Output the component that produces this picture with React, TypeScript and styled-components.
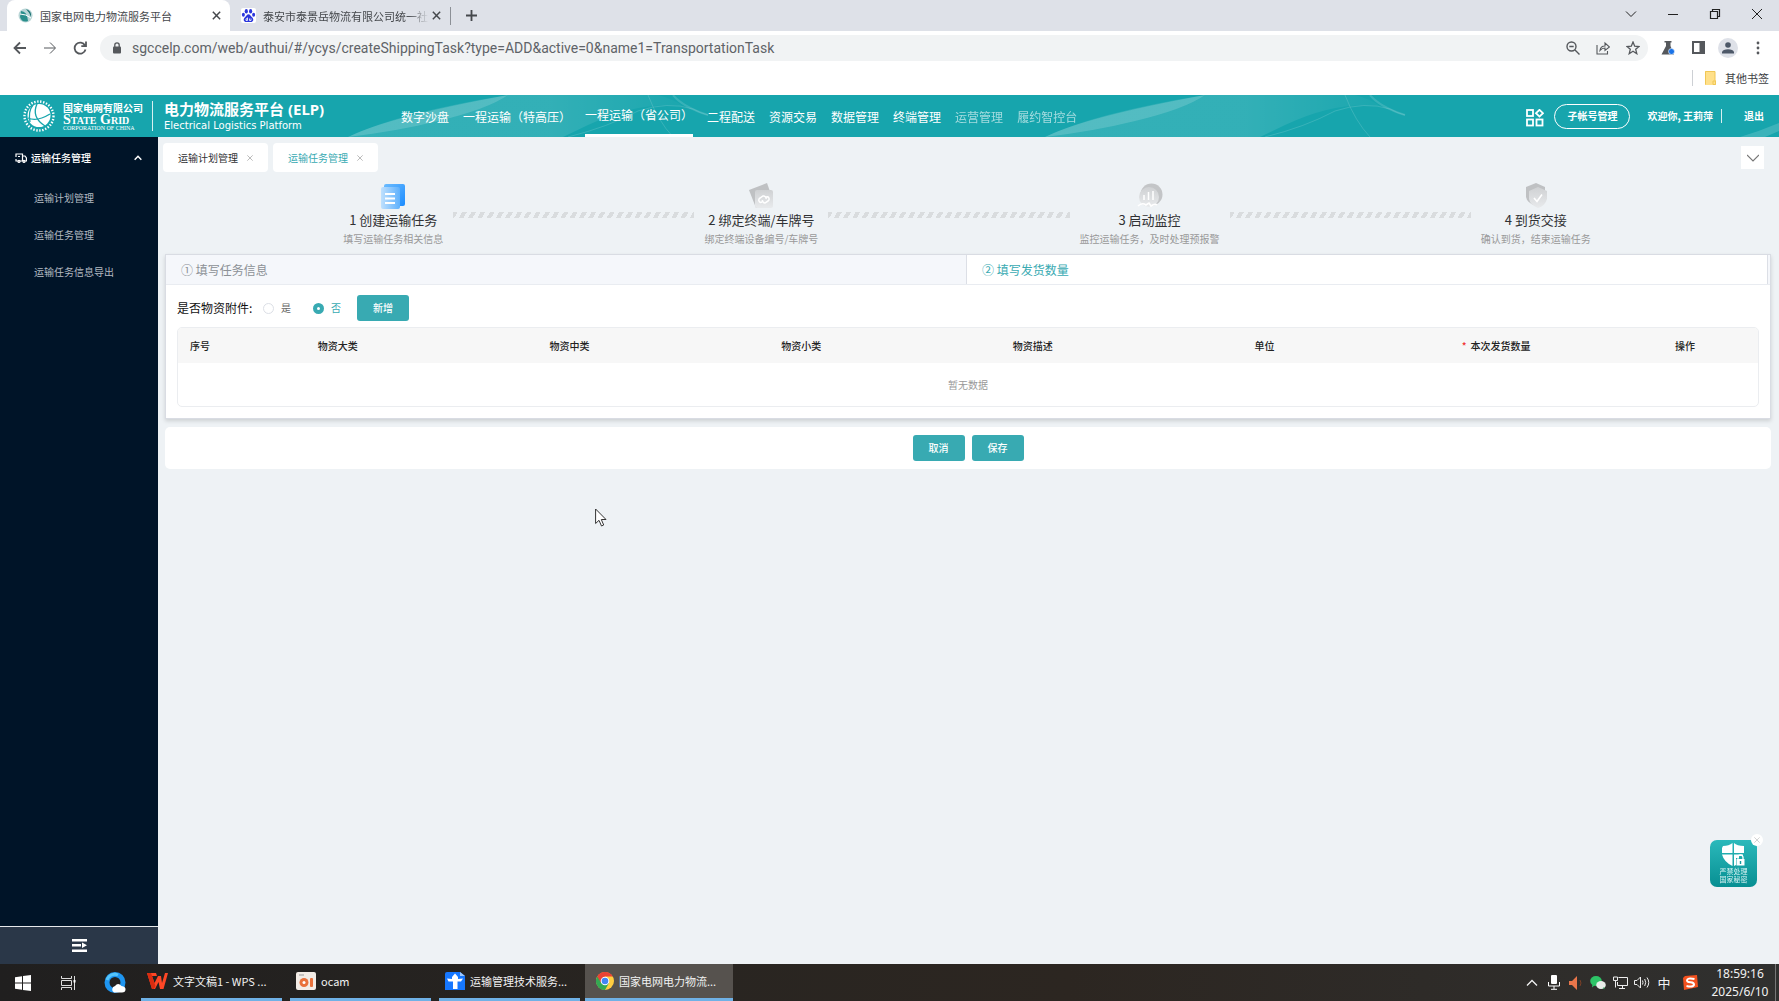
import React from "react";
import styled, { createGlobalStyle, css } from "styled-components";

const cjk = `"Noto Sans CJK SC", sans-serif`;
const teal = "#38aab2";

const GlobalStyle = createGlobalStyle`
  * { box-sizing: border-box; }
  html, body { margin: 0; }
  body { font-family: ${cjk}; font-size: 10px; line-height: 16px; color: #303133; background: #eef2f5; }
  button { font: inherit; color: inherit; background: none; border: 0; padding: 0; }
  a { color: inherit; text-decoration: none; }
  svg { display: block; flex: none; }
`;

const Screen = styled.div`
  display: flex;
  flex-direction: column;
  height: 100vh;
  overflow: hidden;
`;

/* ---------- browser ---------- */
const TabStrip = styled.div`
  display: flex;
  align-items: stretch;
  height: 31px;
  padding-left: 7px;
  background: #dee1e8;
  color: #45484c;
  font-size: 11px;
`;
const BrowserTab = styled.div<{ $active?: boolean }>`
  display: flex;
  align-items: center;
  gap: 7px;
  width: ${(p) => (p.$active ? 223 : 220)}px;
  padding: 0 8px 0 11px;
  border-radius: 8px 8px 0 0;
  background: ${(p) => (p.$active ? "#fff" : "none")};
  button { margin-left: -6px; }
`;
const TabTitle = styled.span<{ $fade?: boolean }>`
  flex: 1;
  white-space: nowrap;
  ${(p) => p.$fade && css`mask-image: linear-gradient(90deg, #000 88%, transparent);`}
`;
const IconButton = styled.button`
  display: flex;
  align-items: center;
  justify-content: center;
  width: 12px;
  height: 16px;
`;
const NewTab = styled(IconButton)`
  align-self: center;
  width: 42px;
  height: 18px;
  border-left: 1px solid #8c9096;
`;
const WindowControls = styled.div`
  display: flex;
  align-items: center;
  margin-left: auto;
  padding: 0 1px 4px 0;
  color: #222;
  button { width: 42px; }
`;
const Toolbar = styled.div`
  display: flex;
  align-items: center;
  height: 33px;
  padding: 0 6px 0 5px;
  background: #fff;
  color: #55585c;
`;
const ToolButton = styled(IconButton)`
  width: 30px;
  height: 26px;
`;
const AddressBar = styled.div`
  flex: 1;
  display: flex;
  align-items: center;
  height: 26px;
  margin: 0 5px;
  padding-left: 13px;
  border-radius: 13px;
  background: #f1f3f4;
`;
const Url = styled.input`
  flex: 1;
  margin-left: 11px;
  padding: 0;
  border: 0;
  outline: 0;
  background: none;
  color: #5f6368;
  font: 14px/20px Roboto, sans-serif;
`;
const Avatar = styled.span`
  display: flex;
  align-items: center;
  justify-content: center;
  width: 20px;
  height: 20px;
  border-radius: 50%;
  background: #dee1e8;
`;
const Bookmarks = styled.div`
  display: flex;
  align-items: center;
  justify-content: flex-end;
  height: 31px;
  padding: 0 10px 4px 0;
  background: #fff;
  color: #3c4043;
  font-size: 11px;
`;
const Bookmark = styled.button`
  display: flex;
  align-items: center;
  gap: 9px;
  padding-left: 12px;
  border-left: 1px solid #cdd0d4;
`;

/* ---------- site header ---------- */
const Header = styled.header`
  position: relative;
  display: flex;
  align-items: center;
  height: 42px;
  padding: 0 15px 0 23px;
  background: #17a5ad;
  color: #fff;
`;
const Swoosh = styled.svg`
  position: absolute;
  inset: 0;
  width: 100%;
  height: 100%;
`;
const Brand = styled.div`
  position: relative;
  display: flex;
  align-items: center;
  width: 378px;
`;
const Company = styled.div`
  margin-left: 8px;
  padding-right: 9px;
  border-right: 1px solid #d8f0f1;
  height: 30px;
  font-weight: 700;
  line-height: 14px;
  white-space: nowrap;
`;
const CompanyEn = styled.div`
  font: 700 14px/10px "Liberation Serif", serif;
  font-variant: small-caps;
`;
const CompanySub = styled.div`
  font: 6px/6px "Liberation Serif", serif;
`;
const Product = styled.div`
  margin-left: 11px;
  font: 700 15px/20px "Noto Sans", ${cjk};
  white-space: nowrap;
`;
const ProductEn = styled.div`
  font: 10px/14px "DejaVu Sans", sans-serif;
`;
const Nav = styled.nav`
  position: relative;
  display: flex;
  gap: 14px;
  height: 100%;
  font-size: 12px;
  line-height: 44px;
  white-space: nowrap;
`;
const NavLink = styled.a<{ $active?: boolean; $dim?: boolean }>`
  opacity: ${(p) => (p.$dim ? 0.6 : 1)};
  ${(p) => p.$active && css`line-height: 40px; border-bottom: 3px solid #fff;`}
`;
const UserArea = styled.div`
  position: relative;
  display: flex;
  align-items: center;
  margin-left: auto;
  font-weight: 700;
  white-space: nowrap;
  svg { margin-top: 4px; }
`;
const AccountButton = styled.button`
  width: 76px;
  height: 25px;
  margin: 0 17px 0 10px;
  border: 1px solid #fff;
  border-radius: 13px;
  font-weight: 700;
`;
const Welcome = styled.span`
  padding-right: 8px;
  margin-right: 22px;
  border-right: 1px solid #d8f0f1;
  line-height: 14px;
`;

/* ---------- layout ---------- */
const Body = styled.div`
  flex: 1;
  display: flex;
  min-height: 0;
`;
const Sidebar = styled.aside`
  display: flex;
  flex-direction: column;
  width: 158px;
  background: #001428;
  color: #b3bac2;
`;
const MenuGroup = styled.button`
  display: flex;
  align-items: center;
  gap: 4px;
  height: 42px;
  padding: 0 15px;
  color: #fff;
  font-weight: 500;
  svg:last-child { margin-left: auto; }
`;
const MenuItem = styled.a`
  padding-left: 34px;
  line-height: 37px;
`;
const Collapse = styled.button`
  display: flex;
  align-items: center;
  justify-content: center;
  height: 38px;
  margin-top: auto;
  border-top: 1px solid #e6e9ec;
  background: #2a3748;
  color: #fff;
`;
const Main = styled.main`
  flex: 1;
  min-width: 0;
  padding: 6px 8px 0 5px;
`;
const PageTabs = styled.div`
  display: flex;
  align-items: center;
  gap: 5px;
  height: 29px;
`;
const PageTab = styled.div<{ $active?: boolean }>`
  display: flex;
  align-items: center;
  gap: 8px;
  height: 29px;
  padding: 0 15px;
  border-radius: 4px;
  background: #fff;
  color: ${(p) => (p.$active ? teal : "#303133")};
  button { color: #999; width: 7px; }
`;
const More = styled.button`
  display: flex;
  align-items: center;
  justify-content: center;
  width: 23px;
  height: 23px;
  margin: 0 7px 0 auto;
  background: #fff;
  color: #777;
`;
const Steps = styled.div`
  display: flex;
  justify-content: center;
  gap: 8px;
  height: 82px;
  padding-top: 11px;
`;
const Step = styled.div`
  display: flex;
  flex-direction: column;
  align-items: center;
  padding: 0 2px;
  white-space: nowrap;
`;
const StepTitle = styled.div`
  font-size: 13px;
  line-height: 22px;
`;
const StepNote = styled.div`
  color: #999;
`;
const Dashes = styled.div`
  width: 15%;
  height: 6px;
  margin-top: 29px;
  background: repeating-linear-gradient(120deg, #d9dcde 0 4px, transparent 4px 8px);
`;
const Card = styled.section`
  margin-left: 2px;
  border: 1px solid #d9dce3;
  background: #fff;
  box-shadow: 0 2px 4px rgba(0, 0, 0, 0.14);
`;
const CardTabs = styled.div`
  display: flex;
  height: 30px;
  padding-right: 2px;
  border-bottom: 1px solid #e9ecf1;
  background: #f5f7fb;
`;
const CardTab = styled.button<{ $active?: boolean }>`
  flex: 1;
  padding-left: 15px;
  text-align: left;
  font-size: 12px;
  color: #8c9196;
  ${(p) => p.$active && css`background: #fff; color: ${teal}; border: solid #dcdfe6; border-width: 0 1px;`}
`;
const CardBody = styled.div`
  padding: 10px 11px 11px;
`;
const FormRow = styled.div`
  display: flex;
  align-items: center;
  height: 26px;
  margin-bottom: 6px;
`;
const Legend = styled.span`
  width: 86px;
  font-size: 12px;
  color: #111;
`;
const RadioLabel = styled.label`
  display: flex;
  align-items: center;
  gap: 7px;
  width: 50px;
  color: #666;
  &:has(input:checked) { color: ${teal}; width: 44px; }
`;
const Radio = styled.input`
  appearance: none;
  width: 11px;
  height: 11px;
  margin: 0;
  border: 1px solid #dcdfe6;
  border-radius: 50%;
  &:checked { border: 4px solid ${teal}; }
`;
const Button = styled.button`
  width: 52px;
  height: 26px;
  border-radius: 3px;
  background: ${teal};
  color: #fff;
  font-weight: 500;
`;
const TableFrame = styled.div`
  border: 1px solid #ebedf0;
  border-radius: 5px;
  overflow: hidden;
`;
const Table = styled.table`
  width: 100%;
  table-layout: fixed;
  border-collapse: collapse;
  text-align: center;
  th { height: 35px; padding: 0; background: #f7f7f7; font-weight: 500; color: #222; }
  td { height: 43px; padding: 0; color: #999; }
`;
const Required = styled.span`
  margin-right: 4px;
  color: #f03030;
`;
const Actions = styled.div`
  display: flex;
  align-items: center;
  justify-content: center;
  gap: 7px;
  height: 42px;
  margin: 8px 0 0 2px;
  border-radius: 5px;
  background: #fff;
`;

/* ---------- overlays ---------- */
const Secret = styled.aside`
  position: fixed;
  right: 22px;
  bottom: 114px;
  display: flex;
  flex-direction: column;
  align-items: center;
  width: 47px;
  height: 47px;
  padding-top: 3px;
  border-radius: 7px;
  background: linear-gradient(#2bb9bb, #078f92);
  color: #d9f3f3;
  font-size: 7px;
  line-height: 8px;
  text-align: center;
`;
const SecretClose = styled.button`
  position: absolute;
  top: -6px;
  right: -6px;
  display: flex;
  align-items: center;
  justify-content: center;
  width: 12px;
  height: 12px;
  border-radius: 50%;
  background: #fff;
  color: #bbb;
`;
const Pointer = styled.svg`
  position: fixed;
  left: 595px;
  top: 508px;
`;

/* ---------- taskbar ---------- */
const Taskbar = styled.footer`
  display: flex;
  align-items: center;
  height: 37px;
  background: linear-gradient(90deg, #201f1f, #292521 40%, #2c2621 60%, #30302f);
  color: #f2f2f2;
  font-size: 11px;
`;
const SystemButton = styled(IconButton)`
  width: 46px;
  height: 37px;
`;
const Launchers = styled.div`
  display: flex;
  width: 141px;
`;
const Task = styled.button<{ $active?: boolean }>`
  display: flex;
  align-items: center;
  gap: 5px;
  width: ${(p) => (p.$active ? 148 : 141)}px;
  height: 37px;
  margin-right: ${(p) => (p.$active ? 0 : 8)}px;
  padding: 0 0 0 6px;
  ${(p) => p.$active && css`background: #56524e; margin-left: -3px; padding-left: 11px;`}
  border-bottom: 3px solid #6fb1e6;
  white-space: nowrap;
`;
const Tray = styled.div`
  display: flex;
  align-items: center;
  margin-left: auto;
`;
const TrayButton = styled(IconButton)<{ $wide?: boolean }>`
  width: ${(p) => (p.$wide ? 30 : 22)}px;
  height: 37px;
  font-size: 13px;
`;
const Clock = styled.div`
  width: 70px;
  font: 12px/18px "Noto Sans", sans-serif;
  text-align: center;
`;
const ShowDesktop = styled.button`
  width: 4px;
  height: 37px;
  border-left: 1px solid #777;
`;

type StrokeProps = { d: string; size?: number; w?: number; box?: number };
const Stroke = ({ d, size = 12, w = 1, box = 12 }: StrokeProps) => (
  <svg width={size} height={size} viewBox={`0 0 ${box} ${box}`} fill="none" stroke="currentColor" strokeWidth={w}>
    <path d={d} />
  </svg>
);
const cross = "M2 2 10 10M10 2 2 10";

const GlobeFavicon = () => (
  <svg width="15" height="15" viewBox="0 0 15 15">
    <circle cx="7.5" cy="7.5" r="7" fill="#b9d5d6" />
    <path d="M3 3Q9 3 10 13Q4 15 2 9Z" fill="#2a8f8c" />
    <path d="M8 1Q14 3 13 9Q12 5 8 1Z" fill="#16706f" />
    <path d="M2 6Q8 6 13 10" stroke="#fff" fill="none" />
  </svg>
);
const PawFavicon = () => (
  <svg width="15" height="15" viewBox="0 0 15 15">
    <rect width="15" height="15" rx="2" fill="#fff" />
    <g fill="#2b36dc">
      <ellipse cx="5.3" cy="3.2" rx="1.6" ry="2.2" />
      <ellipse cx="9.6" cy="3.2" rx="1.6" ry="2.2" />
      <ellipse cx="2.4" cy="6.8" rx="1.5" ry="2" />
      <ellipse cx="12.6" cy="6.8" rx="1.5" ry="2" />
      <path d="M7.5 6.3C9 6.3 9.6 8 11 9.2C13.5 11.5 12 14.3 9.6 14H5.4C3 14.3 1.5 11.5 4 9.2C5.4 8 6 6.3 7.5 6.3Z" />
    </g>
    <path d="M6.5 9.5V12.5H5V10.8H6.5M8.5 10.5V12.5H10V10.5" stroke="#fff" strokeWidth=".8" fill="none" />
  </svg>
);
const GridLogo = () => (
  <svg width="32" height="34" viewBox="0 0 32 34" fill="none" stroke="#fff">
    <circle cx="16" cy="17" r="14.5" strokeWidth="2.4" strokeDasharray="1.4 1.6" />
    <circle cx="16" cy="16.5" r="11.5" fill="#fff" stroke="none" />
    <path d="M14 5Q8 18 22 27M5 19Q14 23 27 15M10 6Q5 12 7 23" stroke="#17a5ad" strokeWidth="1.3" />
  </svg>
);
const AppsIcon = () => (
  <svg width="18" height="18" viewBox="0 0 18 18" fill="none" stroke="#fff" strokeWidth="1.8">
    <rect x="1" y="1" width="6" height="6" />
    <rect x="1" y="10.5" width="6" height="6" />
    <rect x="10.5" y="10.5" width="6" height="6" />
    <path d="M13.5 .8 17 4.2 13.5 7.6 10 4.2Z" />
  </svg>
);

const TaskIcon = () => (
  <svg width="26" height="26" viewBox="0 0 26 26">
    <defs>
      <linearGradient id="taskBack" x1="0" y1="0" x2="1" y2="1">
        <stop stopColor="#6cbcff" />
        <stop offset="1" stopColor="#1b8cff" />
      </linearGradient>
      <linearGradient id="taskFront" x1="0" y1="0" x2="1" y2="0">
        <stop stopColor="#bfe0fd" />
        <stop offset="1" stopColor="#5fb1fd" />
      </linearGradient>
    </defs>
    <rect x="4" y="1" width="21" height="22" rx="2" fill="url(#taskBack)" />
    <rect x="1" y="4" width="19" height="22" rx="2" fill="url(#taskFront)" />
    <path d="M5 11H15M5 15.500H15M5 20H15" stroke="#fff" strokeWidth="1.8" />
  </svg>
);
const GreyDefs = () => (
  <defs>
    <linearGradient id="greyFront" x1="0" y1="0" x2="0" y2="1">
      <stop stopColor="#cfd1d3" />
      <stop offset="1" stopColor="#e8eaec" />
    </linearGradient>
  </defs>
);
const BindIcon = () => (
  <svg width="26" height="26" viewBox="0 0 26 26">
    <GreyDefs />
    <path d="M1 7 19 0 25 17 8 25Z" fill="#bfc1c3" />
    <rect x="7" y="7" width="18" height="18" rx="2" fill="url(#greyFront)" />
    <path d="M14 19 12.500 19.500A2.500 2.500 0 0 1 12 15L15 13A2.500 2.500 0 0 1 18 16M18 14 20 13.800A2.500 2.500 0 0 1 20 18L17 20A2.500 2.500 0 0 1 14.500 17" fill="none" stroke="#fff" strokeWidth="1.5" />
  </svg>
);
const WatchIcon = () => (
  <svg width="26" height="26" viewBox="0 0 26 26">
    <circle cx="14.500" cy="11.500" r="11" fill="#c3c5c7" />
    <circle cx="12" cy="14" r="10" fill="url(#greyFront)" />
    <path d="M7 12V17M11.500 9V17M16 8V17" stroke="#fff" strokeWidth="1.5" />
    <path d="M1 23Q5 19 9 22L12 20 14 23Q18 20 20 22" stroke="#fff" strokeWidth="1.6" fill="none" />
  </svg>
);
const ShieldIcon = () => (
  <svg width="26" height="26" viewBox="0 0 26 26">
    <path d="M3 4 13 0 22 4V14Q21 20 13 23Q4 20 3 14Z" fill="#bfc1c3" />
    <path d="M6 8 15 4 24 8V16Q22 23 15 25Q7 22 6 16Z" fill="url(#greyFront)" />
    <path d="M11 15 14 18.500 19 11.500" stroke="#fff" strokeWidth="1.6" fill="none" />
  </svg>
);

const navItems = [
  { label: "数字沙盘" },
  { label: "一程运输（特高压）" },
  { label: "一程运输（省公司）", active: true },
  { label: "二程配送" },
  { label: "资源交易" },
  { label: "数据管理" },
  { label: "终端管理" },
  { label: "运营管理", dim: true },
  { label: "履约智控台", dim: true },
];
const steps = [
  { icon: <TaskIcon />, title: "1 创建运输任务", note: "填写运输任务相关信息" },
  { icon: <BindIcon />, title: "2 绑定终端/车牌号", note: "绑定终端设备编号/车牌号" },
  { icon: <WatchIcon />, title: "3 启动监控", note: "监控运输任务，及时处理预报警" },
  { icon: <ShieldIcon />, title: "4 到货交接", note: "确认到货，结束运输任务" },
];

const Browser = () => (
  <>
    <TabStrip>
      <BrowserTab $active>
        <GlobeFavicon />
        <TabTitle>国家电网电力物流服务平台</TabTitle>
        <IconButton aria-label="关闭标签页"><Stroke d={cross} w={1.6} size={11} /></IconButton>
      </BrowserTab>
      <BrowserTab>
        <PawFavicon />
        <TabTitle $fade>泰安市泰景岳物流有限公司统一社</TabTitle>
        <IconButton aria-label="关闭标签页"><Stroke d={cross} w={1.6} size={11} /></IconButton>
      </BrowserTab>
      <NewTab aria-label="新标签页"><Stroke d="M6 0V12M0 6H12" w={2} size={11} /></NewTab>
      <WindowControls>
        <IconButton aria-label="搜索标签页"><Stroke d="M1 3.500 6 8.500 11 3.500" /></IconButton>
        <IconButton aria-label="最小化"><Stroke d="M1 6.500H11" /></IconButton>
        <IconButton aria-label="还原"><Stroke d="M1.500 3.500H8.500V10.500H1.500ZM3.500 3.500V1.500H10.500V8.500H8.500" w={1.2} /></IconButton>
        <IconButton aria-label="关闭"><Stroke d="M1 1 11 11M11 1 1 11" /></IconButton>
      </WindowControls>
    </TabStrip>
    <Toolbar>
      <ToolButton aria-label="后退"><Stroke d="M13 7H2M7 1.500 1.500 7 7 12.500" box={14} size={14} w={1.8} /></ToolButton>
      <ToolButton aria-label="前进"><Stroke d="M1 7H12M7 1.500 12.500 7 7 12.500" box={14} size={14} w={1} /></ToolButton>
      <ToolButton aria-label="重新加载"><Stroke d="M12 4.500A5.500 5.500 0 1 0 12.500 8.500M13 .5V5.200H8.300" box={14} size={14} w={1.8} /></ToolButton>
      <AddressBar>
        <svg width="8" height="12" viewBox="0 0 8 12">
          <rect y="4.500" width="8" height="7" rx="1" fill="#55585c" />
          <path d="M1.800 5V3A2.200 2.200 0 0 1 6.200 3V5" fill="none" stroke="#55585c" strokeWidth="1.300" />
        </svg>
        <Url aria-label="地址" defaultValue="sgccelp.com/web/authui/#/ycys/createShippingTask?type=ADD&active=0&name1=TransportationTask" />
        <ToolButton aria-label="缩放"><Stroke d="M5.500 1A4.500 4.500 0 1 1 5.500 10A4.500 4.500 0 1 1 5.500 1M9 9 13.500 13.500M3.300 5.500H7.700" box={14} size={14} w={1.4} /></ToolButton>
        <ToolButton aria-label="分享"><Stroke d="M1 4V13H11.500V10M4 9.500Q4.500 5 9 5V2L13.500 6 9 9.500V7Q6 7 4 9.500Z" box={14} size={14} w={1.1} /></ToolButton>
        <ToolButton aria-label="收藏"><Stroke d="M7 1 8.700 5.200 13 5.500 9.700 8.300 10.800 12.700 7 10.300 3.200 12.700 4.300 8.300 1 5.500 5.300 5.200Z" box={14} size={14} w={1.3} /></ToolButton>
      </AddressBar>
      <ToolButton aria-label="实验">
        <svg width="14" height="14" viewBox="0 0 14 14">
          <path d="M3.500 0H10.500V1.500H9.500V5L13 13.500H.5L5 5V1.500H3.500Z" fill="#55585c" />
          <circle cx="10.500" cy="10.500" r="3" fill="#1a73e8" stroke="#fff" strokeWidth=".6" />
        </svg>
      </ToolButton>
      <ToolButton aria-label="侧边栏">
        <svg width="13" height="13" viewBox="0 0 13 13">
          <rect x="1" y="1" width="11" height="11" fill="none" stroke="#55585c" strokeWidth="2" />
          <rect x="7.500" y="1" width="5" height="11" fill="#55585c" />
        </svg>
      </ToolButton>
      <ToolButton aria-label="用户">
        <Avatar>
          <svg width="12" height="12" viewBox="0 0 12 12" fill="#4d5868">
            <circle cx="6" cy="3" r="2.800" />
            <path d="M0 11.500V10Q1 7.200 6 7.200T12 10V11.500Z" />
          </svg>
        </Avatar>
      </ToolButton>
      <ToolButton aria-label="菜单">
        <svg width="4" height="14" viewBox="0 0 4 14" fill="#55585c">
          <circle cx="2" cy="2" r="1.400" /><circle cx="2" cy="7" r="1.400" /><circle cx="2" cy="12" r="1.400" />
        </svg>
      </ToolButton>
    </Toolbar>
    <Bookmarks>
      <Bookmark>
        <svg width="11" height="14" viewBox="0 0 11 14">
          <path d="M0 0H10V9H11V14H0Z" fill="#ffe08a" />
          <path d="M.5 13.500V.5H10V9.500M8 13.500V10H10.500V13.500Z" stroke="#f0c755" fill="none" />
        </svg>
        其他书签
      </Bookmark>
    </Bookmarks>
  </>
);

const Wave = ({ x }: { x: number }) => (
  <g transform={`translate(${x})`}>
    <path d="M0 42Q50 18 160 0H310Q325 4 335 11Q290 6 240 30L215 42Z" fill="url(#waveFill)" />
    <path d="M0 42Q40 22 160 0Q140 14 90 26Q50 36 0 42Z" fill="#fff" opacity=".16" />
    <path d="M220 42Q260 32 290 16Q320 6 345 14Q352 18 360 20M300 0Q310 26 325 42" fill="none" stroke="#fff" opacity=".14" />
    <path d="M325 0Q335 12 360 20" fill="none" stroke="#fff" strokeWidth="2" opacity=".14" />
  </g>
);

const SiteHeader = () => (
  <Header>
    <Swoosh viewBox="0 0 1779 42" preserveAspectRatio="none" aria-hidden="true">
      <defs>
        <linearGradient id="waveFill">
          <stop stopColor="#fff" stopOpacity=".12" />
          <stop offset=".6" stopColor="#fff" stopOpacity=".12" />
          <stop offset="1" stopColor="#fff" stopOpacity=".02" />
        </linearGradient>
      </defs>
      <Wave x={348} />
      <Wave x={1045} />
      <path d="M1740 42Q1760 36 1779 28V36L1765 42Z" fill="#fff" opacity=".16" />
    </Swoosh>
    <Brand>
      <GridLogo />
      <Company>
        国家电网有限公司
        <CompanyEn>State Grid</CompanyEn>
        <CompanySub>CORPORATION OF CHINA</CompanySub>
      </Company>
      <Product>
        电力物流服务平台 (ELP)
        <ProductEn>Electrical Logistics Platform</ProductEn>
      </Product>
    </Brand>
    <Nav>
      {navItems.map((n) => (
        <NavLink href="#" key={n.label} $active={n.active} $dim={n.dim}>{n.label}</NavLink>
      ))}
    </Nav>
    <UserArea>
      <AppsIcon />
      <AccountButton>子帐号管理</AccountButton>
      <Welcome>欢迎你, 王莉萍</Welcome>
      <a href="#">退出</a>
    </UserArea>
  </Header>
);

const SideMenu = () => (
  <Sidebar>
    <MenuGroup>
      <svg width="12" height="10" viewBox="0 0 12 10" fill="none" stroke="#fff" strokeWidth="1.200">
        <path d="M3 8H1V6M1 4V1H7.500V8H5M7.500 3H10L11.400 5V8H9.500M3 3.500H5" />
        <circle cx="4" cy="8.400" r="1" /><circle cx="9" cy="8.400" r="1" />
      </svg>
      运输任务管理
      <Stroke d="M2 8 6 4 10 8" w={1.8} size={10} />
    </MenuGroup>
    {["运输计划管理", "运输任务管理", "运输任务信息导出"].map((t) => (
      <MenuItem href="#" key={t}>{t}</MenuItem>
    ))}
    <Collapse aria-label="收起菜单">
      <svg width="15" height="13" viewBox="0 0 15 13" fill="#fff">
        <path d="M0 0H15V2.500H0ZM0 5H9V7.500H0ZM0 10.500H15V13H0ZM10 3.500 15 6.250 10 9Z" />
      </svg>
    </Collapse>
  </Sidebar>
);

const Content = () => (
  <Main>
    <PageTabs>
      <PageTab>运输计划管理<IconButton aria-label="关闭"><Stroke d={cross} size={8} /></IconButton></PageTab>
      <PageTab $active>运输任务管理<IconButton aria-label="关闭"><Stroke d={cross} size={8} /></IconButton></PageTab>
      <More aria-label="更多"><Stroke d="M0 3 6 9 12 3" size={12} w={1.2} /></More>
    </PageTabs>
    <Steps>
      {steps.map((s, i) => (
        <React.Fragment key={s.title}>
          {i > 0 && <Dashes />}
          <Step>
            {s.icon}
            <StepTitle>{s.title}</StepTitle>
            <StepNote>{s.note}</StepNote>
          </Step>
        </React.Fragment>
      ))}
    </Steps>
    <Card>
      <CardTabs>
        <CardTab>① 填写任务信息</CardTab>
        <CardTab $active>② 填写发货数量</CardTab>
      </CardTabs>
      <CardBody>
        <FormRow role="radiogroup" aria-label="是否物资附件">
          <Legend>是否物资附件:</Legend>
          <RadioLabel><Radio type="radio" name="attachment" />是</RadioLabel>
          <RadioLabel><Radio type="radio" name="attachment" defaultChecked />否</RadioLabel>
          <Button>新增</Button>
        </FormRow>
        <TableFrame>
          <Table>
            <colgroup>
              <col width="44" />
              <col /><col /><col /><col /><col /><col />
              <col width="146" />
            </colgroup>
            <thead>
              <tr>
                <th>序号</th>
                <th>物资大类</th>
                <th>物资中类</th>
                <th>物资小类</th>
                <th>物资描述</th>
                <th>单位</th>
                <th><Required>*</Required>本次发货数量</th>
                <th>操作</th>
              </tr>
            </thead>
            <tbody>
              <tr><td colSpan={8}>暂无数据</td></tr>
            </tbody>
          </Table>
        </TableFrame>
      </CardBody>
    </Card>
    <Actions>
      <Button>取消</Button>
      <Button>保存</Button>
    </Actions>
  </Main>
);

const DesktopBar = () => (
  <Taskbar>
    <Launchers>
      <SystemButton aria-label="开始">
        <svg width="16" height="16" viewBox="0 0 16 16" fill="#fff">
          <path d="M0 2.200 7 1.200V7.500H0ZM8 1 16 0V7.500H8ZM0 8.500H7V14.800L0 13.800ZM8 8.500H16V16L8 15Z" />
        </svg>
      </SystemButton>
      <SystemButton aria-label="任务视图">
        <svg width="16" height="14" viewBox="0 0 16 14" fill="none" stroke="#ddd">
          <path d="M.5 0V2.500H10.500V0M.5 4.500H10.500V9.500H.5ZM.5 14V11.500H10.500V14M13.500 0V14" />
          <rect x="12.500" y="4" width="2" height="2.500" fill="#fff" stroke="none" />
        </svg>
      </SystemButton>
      <SystemButton aria-label="QQ浏览器">
        <svg width="22" height="22" viewBox="0 0 22 22">
          <circle cx="11" cy="10.500" r="8" fill="none" stroke="#1e95f0" strokeWidth="5" />
          <path d="M3 8A8 8 0 0 1 14 3" fill="none" stroke="#54c4fa" strokeWidth="3" />
          <path d="M10 20.500A3.500 3.500 0 0 1 11 14Q14 10 17.500 14Q22 14.500 21.500 18Q21 20.500 18 20.500Z" fill="#fff" />
        </svg>
      </SystemButton>
    </Launchers>
    <Task>
      <svg width="21" height="18" viewBox="0 0 21 18" fill="none">
        <path d="M0 1H9L10 4H5L7.500 11 11 4H14L15 11 18 1H21L16.500 17H13L11.500 10 8 17H5Z" fill="#ff4726" />
        <path d="M0 1H4L8.500 14 7 17H5Z" fill="#d92c10" />
      </svg>
      文字文稿1 - WPS ...
    </Task>
    <Task>
      <svg width="20" height="18" viewBox="0 0 20 18">
        <rect width="20" height="18" rx="2" fill="#f3ece6" />
        <circle cx="8" cy="10.500" r="4.500" fill="#e9713b" /><circle cx="8" cy="10.500" r="1.500" fill="#fff" />
        <rect x="14" y="6" width="3" height="9" rx="1" fill="#e9713b" />
        <path d="M3 3H8" stroke="#999" />
      </svg>
      ocam
    </Task>
    <Task>
      <svg width="20" height="18" viewBox="0 0 20 18">
        <path d="M2 0H15L20 4V18H0V2Q0 0 2 0Z" fill="#1677ff" />
        <path d="M15 0 20 4H15Z" fill="#9cc8ff" />
        <path d="M10 1.500 13 5V7L18 6.500 16 9.500 12.500 9.500V17H8V9.500L3.500 9.500 2 6.500 7 7V5Z" fill="#fff" />
      </svg>
      运输管理技术服务...
    </Task>
    <Task $active>
      <svg width="18" height="18" viewBox="0 0 18 18">
        <circle cx="9" cy="9" r="9" fill="#ffcd40" />
        <path d="M9 9 1.200 4.500A9 9 0 0 0 9 18L13 11Z" fill="#34a853" />
        <path d="M1.200 4.500A9 9 0 0 1 16.800 4.500H9L5.200 11Z" fill="#ea4335" />
        <circle cx="9" cy="9" r="4.300" fill="#fff" /><circle cx="9" cy="9" r="3.300" fill="#4285f4" />
      </svg>
      国家电网电力物流...
    </Task>
    <Tray>
      <TrayButton aria-label="显示隐藏的图标"><Stroke d="M1 8.500 6 3.500 11 8.500" w={1.3} /></TrayButton>
      <TrayButton aria-label="麦克风">
        <svg width="12" height="15" viewBox="0 0 12 15" fill="#fff">
          <rect x="3" width="6" height="9" rx="1" />
          <path d="M.5 7V11H11.500V7M6 11V14M3 14.300H9" stroke="#fff" fill="none" />
        </svg>
      </TrayButton>
      <TrayButton aria-label="声音助手">
        <svg width="14" height="14" viewBox="0 0 14 14">
          <path d="M0 5H3L8 0V14L3 9H0Z" fill="#e8754a" /><path d="M11 4Q13 7 11 10" stroke="#7c3f26" fill="none" />
        </svg>
      </TrayButton>
      <TrayButton aria-label="微信">
        <svg width="16" height="14" viewBox="0 0 16 14">
          <ellipse cx="6" cy="5" rx="5.800" ry="5" fill="#2dc467" /><ellipse cx="11" cy="9" rx="4.800" ry="4" fill="#e8ece9" />
          <path d="M2.500 8 2 11.500 5 9ZM13 12 14.500 13.500 14 11Z" fill="#2dc467" />
        </svg>
      </TrayButton>
      <TrayButton aria-label="网络">
        <svg width="15" height="13" viewBox="0 0 15 13" fill="none" stroke="#eee">
          <path d="M5.500 1.500H14.500V9.500H4.500V6M.5 1H4.500V4.500H.5ZM2.500 4.500V11.500M9.500 9.500V12.500M6 12.500H12" />
        </svg>
      </TrayButton>
      <TrayButton aria-label="音量">
        <svg width="16" height="13" viewBox="0 0 16 13" fill="none" stroke="#eee">
          <path d="M.5 4.500H3L6.500 1V12L3 8.500H.5ZM8.500 4.500Q9.500 6.500 8.500 8.500M10.700 3Q12.700 6.500 10.700 10M13 1.500Q16.500 6.500 13 11.500" />
        </svg>
      </TrayButton>
      <TrayButton aria-label="输入法">中</TrayButton>
      <TrayButton $wide aria-label="搜狗输入法">
        <svg width="15" height="15" viewBox="0 0 15 15">
          <path d="M2 1 14 0 15 12 1 15 0 3Z" fill="#f4511e" />
          <path d="M11.500 4Q4 2.500 4 5.500Q4 7 7.500 7.300T11 9.800Q10 12.500 3.500 11" fill="none" stroke="#fff" strokeWidth="2" />
        </svg>
      </TrayButton>
      <Clock>18:59:16<br />2025/6/10</Clock>
      <ShowDesktop aria-label="显示桌面" />
    </Tray>
  </Taskbar>
);

export default function App() {
  return (
    <Screen>
      <GlobalStyle />
      <Browser />
      <SiteHeader />
      <Body>
        <SideMenu />
        <Content />
      </Body>
      <DesktopBar />
      <Secret>
        <svg width="23" height="24" viewBox="0 0 23 24" fill="#fff">
          <path d="M1 3Q7 3 10.500 0V10H0V5ZM12 0Q15 3 22 3V10H12ZM0 11.500H10.500V23Q2 19 0 11.500ZM12 11.500H21V13H17V15H14V22L12 23Z" />
          <path d="M16 16V14.500A2.500 2.500 0 0 1 21 14.500V16" fill="none" stroke="#fff" strokeWidth="1.300" />
          <path d="M14.500 16H22.500V22.500H14.500Z" />
          <path d="M18.500 18V21" stroke="#129a9d" strokeWidth="1.400" />
        </svg>
        严禁处理<br />国家秘密
        <SecretClose aria-label="关闭"><Stroke d={cross} size={8} /></SecretClose>
      </Secret>
      <Pointer width="12" height="19" viewBox="0 0 12 19" aria-hidden="true">
        <path d="M.6 1V15.500L4 12.300 6.500 18 8.700 17 6.300 11.500H11Z" fill="#fff" stroke="#333" />
      </Pointer>
    </Screen>
  );
}
